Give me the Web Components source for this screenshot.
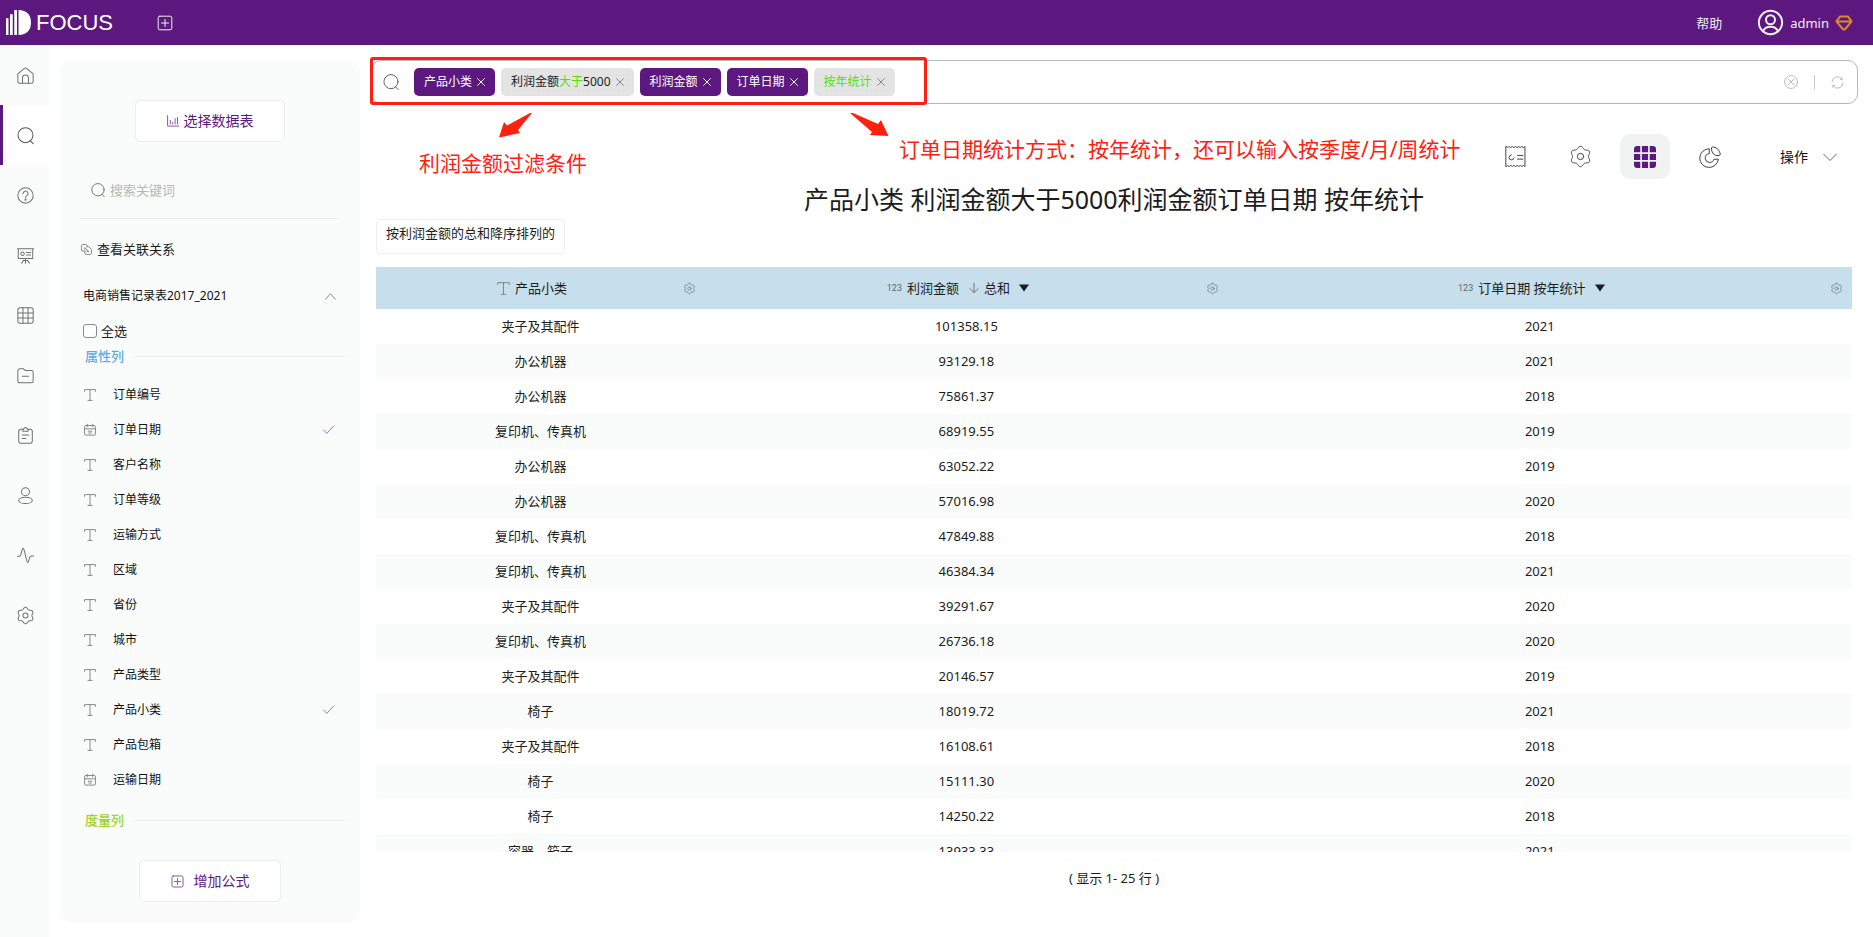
<!DOCTYPE html>
<html lang="zh-CN">
<head>
<meta charset="utf-8">
<meta name="viewport" content="width=device-width, initial-scale=1">
<title>FOCUS</title>
<style>
  html, body { height: 100%; }
  body {
    margin: 0;
    font-family: "Noto Sans", "Noto Sans CJK SC", sans-serif;
    font-size: 13px;
    line-height: 20px;
    color: #1c1c1c;
    background: #fff;
    --brand: #5d187f;
    --surface: #fafcfb;
    --line: #eceeed;
    --mark: #ff2010;
  }
</style>
</head>
<body>
<focus-app></focus-app>

<script>
/* Outline of a six-lobed cog centred on the 20-unit canvas */
function cog(radius, depth) {
  const points = [];
  for (let i = 0; i < 90; i++) {
    const a = i * Math.PI / 45;
    const r = radius + depth * Math.cos(6 * a);
    points.push((10 + r * Math.sin(a)).toFixed(2) + ' ' + (10 - r * Math.cos(a)).toFixed(2));
  }
  return 'M' + points.join('L') + 'Z';
}

const ICONS = {
  plus: '<rect x="1.5" y="1.5" width="17" height="17" rx="2"/><path d="M10 5.5v9M5.500 10h9"/>',
  home: '<path d="M1 8.2 L8.6 1.6 Q10 .6 11.4 1.6 L19 8.2 V17 Q19 19 17 19 H3 Q1 19 1 17 Z"/><path d="M6.5 19v-6a3.5 3.5 0 0 1 7 0v6"/>',
  search: '<circle cx="10" cy="9.6" r="8.8"/><path d="M15.500 16 L19 19.600"/>',
  help: '<circle cx="10" cy="10" r="9"/><path d="M7 7.800a3 3 0 1 1 4.400 2.700Q10 11.300 10 13"/><circle cx="10" cy="15" r=".6"/>',
  board: '<path d="M.5 2h19M1.500 2v11.500h17V2M10 13.500v2.500M5.500 19l2-3h5l2 3M10 16v3"/><circle cx="6.500" cy="8" r="2"/><path d="M11 6.500h5M11 9.500h5"/>',
  table: '<rect x="1" y="1" width="18" height="18" rx="2.500"/><path d="M1 7h18M1 13h18M7 1v18M13 1v18"/>',
  folder: '<path d="M1 4.500Q1 2 3 2h4.500l2 2H17Q19 4 19 6v10.500Q19 18.500 17 18.500H3Q1 18.500 1 16.500Z"/><path d="M6.500 11h7"/>',
  clip: '<path d="M7 2.500H4.500Q2 2.500 2 5v11.500Q2 19 4.500 19h11Q18 19 18 16.500V5Q18 2.500 15.500 2.500H13"/><path d="M7 2.500Q8 2.800 8.300 1.500 Q10 -.2 11.700 1.500 Q12 2.800 13 2.500V5H7Z"/><path d="M6 9.500h8M6 13.500h4"/>',
  user: '<circle cx="10" cy="5.500" r="4.700"/><ellipse cx="10" cy="15.800" rx="8" ry="3.600"/>',
  pulse: '<path d="M.5 11H3Q4 11 4.500 9L6 3.500Q7.200 -.6 8.300 3.500L11.500 16Q12.700 20.500 13.900 16L15 12Q15.500 10.500 17 10.500h2.500"/>',
  gear: '<path d="' + cog(8.6, 1.1) + '"/><circle cx="10" cy="10" r="3"/>',
  chart: '<path d="M1 1v17.500h18.500M5.500 9v6M9.500 12v3M13.500 6v9M17.500 4v11"/>',
  link: '<path d="M7 13H3Q1 13 1 11V3Q1 1 3 1h6q2 0 2 2v2M11 5h3l5 5v7q0 2-2 2H9q-2 0-2-2v-4M7 7l7 7M7 7v3M14 14h-3"/>',
  up: '<path d="M1 15 L10 5 L19 15"/>',
  down: '<path d="M1 6 L10 15 L19 6"/>',
  check: '<path d="M1 11 L7 17 L19 4"/>',
  text: '<path d="M1 4V1h18v3M10 1v18M6.500 19h7"/>',
  date: '<rect x="1" y="2.500" width="18" height="16" rx="2"/><path d="M1 8h18M5.500 .5v4M14.500 .5v4M7 12h6M8 15h4"/>',
  cross: '<path d="M1.500 1.500l17 17M18.500 1.500l-17 17"/>',
  clear: '<circle cx="10" cy="10" r="9.200"/><path d="M5.500 5.500l9 9M14.500 5.500l-9 9"/>',
  refresh: '<path d="M1.500 9A8.500 8.500 0 0 1 17 5M18.500 11A8.500 8.500 0 0 1 3 15M17.200 2.500v3h-3M2.800 17.500v-3h3"/>',
  receipt: '<path d="M1 .5q1.500 2 3 0q1.500 2 3 0q1.500 2 3 0q1.500 2 3 0q1.500 2 3 0q1.500 2 3 0V19.500q-1.500-2-3 0q-1.500-2-3 0q-1.500-2-3 0q-1.500-2-3 0q-1.500-2-3 0q-1.500-2-3 0Z"/><path d="M6 8.500a2.400 2.400 0 1 0 2.600 2.800M12 9h5M12 12.500h5"/>',
  grid: '<g fill="currentColor" stroke="none"><path d="M0 5.700V3Q0 0 3 0h2.700v5.700ZM7.200 0h5.600v5.700H7.200ZM14.300 0H17q3 0 3 3v2.700h-5.700ZM0 7.200h5.700v5.600H0ZM7.200 7.200h5.600v5.600H7.200ZM14.300 7.200H20v5.600h-5.700ZM0 14.300h5.700V20H3q-3 0-3-3ZM7.200 14.300h5.600V20H7.200ZM14.300 14.300H20V17q0 3-3 3h-2.700Z"/></g>',
  pie: '<path d="M9 2.500A8.500 8.500 0 1 0 17.600 12H13.500A4 4 0 1 1 9 7Z"/><path d="M11.500 1.500Q12 .5 13 .8Q18.500 2 19.400 7.500Q19.300 8.500 18.300 8.600H15.200Q13 8 11.800 5Z"/>',
  arrow: '<path d="M10 .5v18.500M1.500 11l8.500 8.300 8.500-8.300"/>',
  tri: '<path d="M0 3h20L10 17Z" fill="currentColor" stroke="none"/>',
  avatar: '<circle cx="10" cy="10" r="9.300"/><circle cx="10" cy="7.800" r="3.600"/><path d="M4 17q1.500-3.600 6-3.600t6 3.600"/>',
  gem: '<path d="M5 2h10L19.500 8L11.500 17.500Q10 19 8.500 17.500L.5 8Z M1 8h18"/>',
  logo: '<g fill="currentColor" stroke="none"><path d="M0 6.500h2V20H0ZM3.200 3.300h2.200V20H3.200ZM6.600 0h2.200V20H6.600ZM10 0Q20 .5 20 10T10 20Z"/></g>'
};

function define(name, html, setup) {
  const template = document.createElement('template');
  template.innerHTML = html;
  customElements.define(name, class extends HTMLElement {
    constructor() {
      super();
      this.attachShadow({ mode: 'open' }).append(template.content.cloneNode(true));
    }
    connectedCallback() {
      if (setup && !this.ready) { this.ready = true; setup(this, this.shadowRoot); }
    }
  });
}

/* Line icon on a 20-unit canvas: name, size in pixels, weight of the line in pixels */
define('focus-icon', `
  <style>:host{display:inline-flex;flex:none} svg{display:block;overflow:visible;fill:none;stroke:currentColor;stroke-linecap:round;stroke-linejoin:round}</style>
  <svg viewBox="0 0 20 20" aria-hidden="true"></svg>`, (el, root) => {
  const svg = root.querySelector('svg');
  const size = Number(el.getAttribute('size') || 18);
  svg.setAttribute('width', size);
  svg.setAttribute('height', size);
  svg.setAttribute('stroke-width', Number(el.getAttribute('weight') || 1) * 20 / size);
  svg.innerHTML = ICONS[el.getAttribute('name')];
});

define('focus-header', `
  <style>
    :host{display:flex;align-items:center;height:45px;padding:0 21px 0 6px;background:var(--brand);color:#eee}
    .brand{display:flex;align-items:center;gap:5px;color:#fff;text-decoration:none;font:22px/28px "Liberation Sans",sans-serif}
    button{all:unset;display:flex;cursor:pointer}
    .add{margin-left:44px}
    .help{margin-left:auto;color:inherit;text-decoration:none}
    .me{align-items:center;gap:7px;margin-left:36px}
    focus-icon[name=gem]{color:#d98a20}
  </style>
  <a class="brand" href="#"><focus-icon name="logo" size="25"></focus-icon>FOCUS</a>
  <button class="add" aria-label="新建"><focus-icon name="plus" size="16"></focus-icon></button>
  <a class="help" href="#">帮助</a>
  <button class="me"><focus-icon name="avatar" size="25" weight="2"></focus-icon>admin<focus-icon name="gem" size="16" weight="2"></focus-icon></button>`);

define('focus-nav', `
  <style>
    :host{display:block;width:50px;flex:none;background:var(--surface);color:#707070}
    a{display:flex;align-items:center;justify-content:center;height:60px;color:inherit}
    a[aria-current]{background:#fff;box-shadow:inset 3px 0 var(--brand);color:#555}
  </style>
  <nav></nav>`, (el, root) => {
  const items = [['home', '首页'], ['search', '搜索'], ['help', '问答'], ['board', '看板'], ['table', '数据表'],
    ['folder', '资源'], ['clip', '任务'], ['user', '用户'], ['pulse', '监控'], ['gear', '设置']];
  root.querySelector('nav').innerHTML = items.map(([icon, label]) =>
    `<a href="#${icon}" aria-label="${label}"${icon === 'search' ? ' aria-current="page"' : ''}><focus-icon name="${icon}" size="17"></focus-icon></a>`).join('');
});

define('focus-button', `
  <style>
    :host{display:block}
    button{box-sizing:border-box;display:flex;align-items:center;justify-content:center;gap:var(--gap,5px);width:100%;height:42px;padding:0;
      border:1px solid #ebeeed;border-radius:5px;background:#fff;color:var(--brand);font:inherit;font-size:14px;cursor:pointer}
    ::slotted(focus-icon){opacity:.7}
  </style>
  <button><slot></slot></button>`);

define('focus-section', `
  <style>
    :host{display:flex;align-items:center;gap:10px;height:20px;margin:0 -5px 0 5px;font-weight:500}
    :host::after{content:"";flex:1;height:1px;background:var(--line)}
  </style>
  <slot></slot>`);

define('focus-column', `
  <style>
    :host{display:block}
    button{all:unset;box-sizing:border-box;display:flex;align-items:center;width:100%;height:35px;padding:0 6px 0 4px;font-size:12px;color:#111;cursor:pointer}
    .kind{color:#888;margin-right:17px}
    .tick{margin-left:auto;color:#9a70b0}
  </style>
  <button></button>`, (el, root) => {
  root.querySelector('button').innerHTML =
    `<focus-icon class="kind" name="${el.getAttribute('kind')}" size="12"></focus-icon><slot></slot>` +
    (el.hasAttribute('picked') ? '<focus-icon class="tick" name="check" size="11"></focus-icon>' : '');
});

define('focus-panel', `
  <style>
    :host{box-sizing:border-box;display:flex;flex-direction:column;flex:none;width:300px;margin:15px 0 15px 10px;padding:40px 20px 20px;border-radius:10px;background:var(--surface)}
    .pick{width:150px;margin:0 auto}
    .find{display:flex;align-items:center;gap:5px;height:56px;margin-top:20px;padding-left:11px;border-bottom:1px solid var(--line);color:#777}
    input[type=search]{flex:1;min-width:0;border:0;padding:0;background:none;outline:0;font:inherit}
    input::placeholder{color:#b4b8b6}
    .rel{display:flex;align-items:center;gap:5px;height:20px;margin-top:20px;color:inherit;text-decoration:none}
    .rel focus-icon{color:#888;margin-left:1px}
    .name{all:unset;display:flex;align-items:center;justify-content:space-between;height:20px;margin-top:27px;padding:0 4px 0 3px;font-size:12px;color:#111;cursor:pointer}
    .name focus-icon{color:#888}
    .all{display:flex;align-items:center;gap:4px;height:20px;margin-top:15px;padding-left:3px}
    .all input{appearance:none;box-sizing:border-box;width:14px;height:14px;margin:0;border:1px solid #8a8a8a;border-radius:3px;background:#fff}
    .attr{color:#5aace8;margin-top:5px}
    .measure{color:#9bd52e;margin-top:13px}
    .cols{margin-top:11px}
    .formula{--gap:10px;width:142px;margin:auto auto 0}
  </style>
  <focus-button class="pick"><focus-icon name="chart" size="12"></focus-icon>选择数据表</focus-button>
  <label class="find"><focus-icon name="search" size="14"></focus-icon><input type="search" placeholder="搜索关键词" aria-label="搜索关键词"></label>
  <a class="rel" href="#relations"><focus-icon name="link" size="11"></focus-icon>查看关联关系</a>
  <button class="name">电商销售记录表2017_2021<focus-icon name="up" size="11"></focus-icon></button>
  <label class="all"><input type="checkbox">全选</label>
  <focus-section class="attr">属性列</focus-section>
  <div class="cols"></div>
  <focus-section class="measure">度量列</focus-section>
  <focus-button class="formula"><focus-icon name="plus" size="13"></focus-icon>增加公式</focus-button>`, (el, root) => {
  const columns = ['订单编号', '订单日期', '客户名称', '订单等级', '运输方式', '区域', '省份', '城市', '产品类型', '产品小类', '产品包箱', '运输日期'];
  root.querySelector('.cols').innerHTML = columns.map(name =>
    `<focus-column kind="${name.includes('日期') ? 'date' : 'text'}"${['订单日期', '产品小类'].includes(name) ? ' picked' : ''}>${name}</focus-column>`).join('');
});

define('focus-chip', `
  <style>
    :host{display:flex;align-items:center;gap:5px;height:28px;padding:0 10px;border-radius:5px;background:var(--brand);color:#fff;font-size:12px;white-space:nowrap}
    :host([soft]){background:radial-gradient(circle at 2px 2px,#d9d9d9 0,transparent 1px) 0 0/5px 5px,#e4e4e4;color:#222}
    button{all:unset;display:flex;cursor:pointer}
    :host([soft]) button{color:#888}
    ::slotted(em){font-style:normal;color:#5bdc10}
  </style>
  <span><slot></slot></span><button aria-label="移除"><focus-icon name="cross" size="8"></focus-icon></button>`);

define('focus-search', `
  <style>
    :host{box-sizing:border-box;display:flex;align-items:center;gap:6px;height:44px;padding:0 13px 0 11px;border:1px solid #aebac6;border-radius:10px;background:#fff}
    .lens{color:#666;margin-right:9px}
    input{flex:1;min-width:0;height:28px;border:0;padding:0;background:none;outline:0;font:inherit}
    button{all:unset;display:flex;color:#b9bfbd;cursor:pointer}
    i{width:1px;height:14px;margin:0 10px;background:#c8cccb}
  </style>
  <focus-icon class="lens" name="search" size="16"></focus-icon>
  <focus-chip>产品小类</focus-chip>
  <focus-chip soft>利润金额<em>大于</em>5000</focus-chip>
  <focus-chip>利润金额</focus-chip>
  <focus-chip>订单日期</focus-chip>
  <focus-chip soft><em>按年统计</em></focus-chip>
  <input type="text" aria-label="搜索条件">
  <button aria-label="清除"><focus-icon name="clear" size="14"></focus-icon></button><i></i>
  <button aria-label="刷新"><focus-icon name="refresh" size="13"></focus-icon></button>`);

define('focus-toolbar', `
  <style>
    :host{display:flex;justify-content:flex-end;gap:15px}
    button{all:unset;display:flex;align-items:center;justify-content:center;width:50px;height:45px;border-radius:10px;color:#444;cursor:pointer}
    button[aria-pressed=true]{background:#f1f3f2;color:var(--brand)}
    .ops{width:auto;gap:15px;margin-left:30px;padding-right:21px;font-size:14px;color:#111}
    .ops focus-icon{color:#666}
  </style>
  <button aria-label="明细"><focus-icon name="receipt" size="21"></focus-icon></button>
  <button aria-label="设置"><focus-icon name="gear" size="21"></focus-icon></button>
  <button aria-label="表格" aria-pressed="true"><focus-icon name="grid" size="22"></focus-icon></button>
  <button aria-label="图表"><focus-icon name="pie" size="22"></focus-icon></button>
  <button class="ops">操作<focus-icon name="down" size="14"></focus-icon></button>`);

define('focus-table', `
  <style>
    :host{display:block;flex:1 1 0;min-height:0;overflow:auto;scrollbar-width:none}
    table{width:100%;border-collapse:collapse;table-layout:fixed}
    th{height:42px;padding:0;background:#c7dfec;font-weight:400}
    .head{display:flex;align-items:center;padding:0 10px 0 4px}
    .head span{flex:1;display:flex;align-items:center;justify-content:center;gap:5px}
    .head small{font:9px/12px Roboto,sans-serif;color:#666}
    .head [name=text]{color:#888}
    .head [name=arrow]{color:#777;margin-left:5px}
    .head [name=tri]{margin-left:4px}
    .gear{all:unset;display:flex;color:#7b8c96;cursor:pointer}
    td{height:33px;padding:0 0 2px;text-align:center}
    tbody tr:nth-child(even){background:var(--surface)}
    col:nth-child(1){width:22.3%} col:nth-child(2){width:35.4%}
  </style>
  <table>
    <colgroup><col><col><col></colgroup>
    <thead><tr>
      <th scope="col"><div class="head"><span><focus-icon name="text" size="13"></focus-icon>产品小类</span><button class="gear" aria-label="列设置"><focus-icon name="gear" size="11"></focus-icon></button></div></th>
      <th scope="col"><div class="head"><span><small>123</small>利润金额<focus-icon name="arrow" size="10"></focus-icon>总和<focus-icon name="tri" size="10"></focus-icon></span><button class="gear" aria-label="列设置"><focus-icon name="gear" size="11"></focus-icon></button></div></th>
      <th scope="col"><div class="head"><span><small>123</small>订单日期 按年统计<focus-icon name="tri" size="10"></focus-icon></span><button class="gear" aria-label="列设置"><focus-icon name="gear" size="11"></focus-icon></button></div></th>
    </tr></thead>
    <tbody></tbody>
  </table>`, (el, root) => {
  const rows = [
    ['夹子及其配件', '101358.15', 2021], ['办公机器', '93129.18', 2021], ['办公机器', '75861.37', 2018],
    ['复印机、传真机', '68919.55', 2019], ['办公机器', '63052.22', 2019], ['办公机器', '57016.98', 2020],
    ['复印机、传真机', '47849.88', 2018], ['复印机、传真机', '46384.34', 2021], ['夹子及其配件', '39291.67', 2020],
    ['复印机、传真机', '26736.18', 2020], ['夹子及其配件', '20146.57', 2019], ['椅子', '18019.72', 2021],
    ['夹子及其配件', '16108.61', 2018], ['椅子', '15111.30', 2020], ['椅子', '14250.22', 2018], ['容器、箱子', '13933.33', 2021]];
  root.querySelector('tbody').innerHTML = rows.map(row => '<tr>' + row.map(cell => `<td>${cell}</td>`).join('') + '</tr>').join('');
});

/* Red notes laid over the result page: a frame round the conditions, two arrows and their captions */
define('focus-notes', `
  <style>
    :host{position:absolute;inset:0;pointer-events:none;color:var(--mark);font-size:21px;line-height:30px;white-space:nowrap}
    div,svg,p{position:absolute;margin:0}
    .frame{box-sizing:border-box;left:10px;top:12px;width:557px;height:48px;border:3px solid;border-radius:3px}
    svg{top:67px;fill:currentColor}
    .a1{left:138px} .a2{left:490px}
    .t1{left:59px;top:103px} .t2{left:539px;top:89px}
  </style>
  <div class="frame"></div>
  <svg class="a1" width="34" height="26"><path d="M34 1 L20 18 L22 21 L1 25.500 L6 10 L9 13.500 L32 1Z"/></svg>
  <svg class="a2" width="40" height="26"><path d="M0 1 L22 20 L20 23 L38.500 24 L31 8 L28 12 L3 1Z"/></svg>
  <p class="t1">利润金额过滤条件</p>
  <p class="t2">订单日期统计方式：按年统计，还可以输入按季度/月/周统计</p>`);

define('focus-result', `
  <style>
    :host{position:relative;display:flex;flex-direction:column;flex:1;min-width:0;padding:15px 15px 0 11px}
    focus-toolbar{margin-top:30px}
    .body{flex:1;display:flex;flex-direction:column;min-height:0;padding:0 6px 0 5px}
    h1{margin:2px 0 0;text-align:center;font-size:25px;line-height:36px;font-weight:400}
    .sort{box-sizing:border-box;align-self:flex-start;height:35px;margin:2px 0 13px;padding:3px 9px;border:1px solid #eee;border-radius:4px}
    footer{height:52px;line-height:52px;margin-bottom:33px;text-align:center}
  </style>
  <focus-search></focus-search>
  <focus-toolbar></focus-toolbar>
  <div class="body">
    <h1>产品小类 利润金额大于5000利润金额订单日期 按年统计</h1>
    <div class="sort">按利润金额的总和降序排列的</div>
    <focus-table></focus-table>
    <footer>( 显示 1- 25 行 )</footer>
  </div>
  <focus-notes></focus-notes>`);

define('focus-app', `
  <style>
    :host{display:flex;flex-direction:column;height:100vh}
    main{flex:1;display:flex;min-height:0}
  </style>
  <focus-header></focus-header>
  <main><focus-nav></focus-nav><focus-panel></focus-panel><focus-result></focus-result></main>`);
</script>
</body>
</html>
